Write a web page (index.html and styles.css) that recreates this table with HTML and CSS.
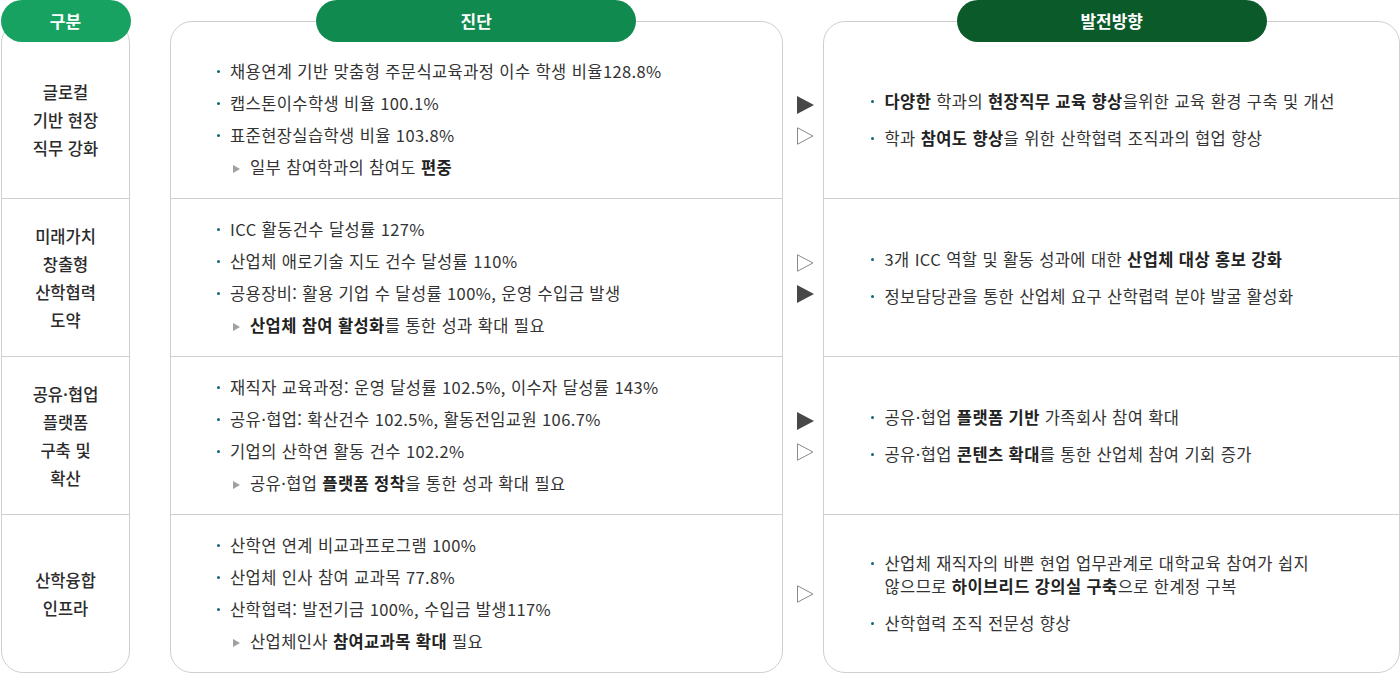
FILE: index.html
```html
<!DOCTYPE html>
<html lang="ko">
<head>
    <meta charset="UTF-8">
    <meta name="viewport" content="width=device-width, initial-scale=1.0">
    <title>진단 및 발전방향</title>
    <link rel="stylesheet" href="styles.css">
</head>
<body>
    <div class="board">
        <!-- 구분 -->
        <div class="col col-gubun">
            <div class="head head-gubun">구분</div>
            <div class="box">
                <div class="row"><p class="label">글로컬<br>기반 현장<br>직무 강화</p></div>
                <div class="row"><p class="label">미래가치<br>창출형<br>산학협력<br>도약</p></div>
                <div class="row"><p class="label">공유·협업<br>플랫폼<br>구축 및<br>확산</p></div>
                <div class="row"><p class="label">산학융합<br>인프라</p></div>
            </div>
        </div>

        <!-- 진단 -->
        <div class="col col-diag">
            <div class="head head-diag">진단</div>
            <div class="box">
                <div class="row">
                    <ul class="items">
                        <li>채용연계 기반 맞춤형 주문식교육과정 이수 학생 비율128.8%</li>
                        <li>캡스톤이수학생 비율 100.1%</li>
                        <li>표준현장실습학생 비율 103.8%</li>
                        <li class="sub">일부 참여학과의 참여도&nbsp;<b>편중</b></li>
                    </ul>
                </div>
                <div class="row">
                    <ul class="items">
                        <li>ICC 활동건수 달성률 127%</li>
                        <li>산업체 애로기술 지도 건수 달성률 110%</li>
                        <li>공용장비: 활용 기업 수 달성률 100%, 운영 수입금 발생</li>
                        <li class="sub"><b>산업체 참여 활성화</b>를 통한 성과 확대 필요</li>
                    </ul>
                </div>
                <div class="row">
                    <ul class="items">
                        <li>재직자 교육과정: 운영 달성률 102.5%, 이수자 달성률 143%</li>
                        <li>공유·협업: 확산건수 102.5%, 활동전임교원 106.7%</li>
                        <li>기업의 산학연 활동 건수 102.2%</li>
                        <li class="sub">공유·협업&nbsp;<b>플랫폼 정착</b>을 통한 성과 확대 필요</li>
                    </ul>
                </div>
                <div class="row">
                    <ul class="items">
                        <li>산학연 연계 비교과프로그램 100%</li>
                        <li>산업체 인사 참여 교과목 77.8%</li>
                        <li>산학협력: 발전기금 100%, 수입금 발생117%</li>
                        <li class="sub">산업체인사&nbsp;<b>참여교과목 확대</b>&nbsp;필요</li>
                    </ul>
                </div>
            </div>
        </div>

        <!-- arrows -->
        <div class="arrows">
            <div class="arrow-cell">
                <svg class="arr" width="17" height="18" viewBox="0 0 17 18"><polygon points="0,0 17,9 0,18" fill="#484848"/></svg>
                <svg class="arr" width="17" height="18" viewBox="0 0 17 18"><polygon points="0.5,0.8 15.9,9 0.5,17.2" fill="none" stroke="#8a8a8a"/></svg>
            </div>
            <div class="arrow-cell">
                <svg class="arr" width="17" height="18" viewBox="0 0 17 18"><polygon points="0.5,0.8 15.9,9 0.5,17.2" fill="none" stroke="#8a8a8a"/></svg>
                <svg class="arr" width="17" height="18" viewBox="0 0 17 18"><polygon points="0,0 17,9 0,18" fill="#484848"/></svg>
            </div>
            <div class="arrow-cell">
                <svg class="arr" width="17" height="18" viewBox="0 0 17 18"><polygon points="0,0 17,9 0,18" fill="#484848"/></svg>
                <svg class="arr" width="17" height="18" viewBox="0 0 17 18"><polygon points="0.5,0.8 15.9,9 0.5,17.2" fill="none" stroke="#8a8a8a"/></svg>
            </div>
            <div class="arrow-cell last">
                <svg class="arr" width="17" height="18" viewBox="0 0 17 18"><polygon points="0.5,0.8 15.9,9 0.5,17.2" fill="none" stroke="#8a8a8a"/></svg>
            </div>
        </div>

        <!-- 발전방향 -->
        <div class="col col-plan">
            <div class="head head-plan">발전방향</div>
            <div class="box">
                <div class="row">
                    <ul class="items wide">
                        <li><span><b>다양한</b> 학과의 <b>현장직무 교육 향상</b>을위한 교육 환경 구축 및 개선</span></li>
                        <li><span>학과 <b>참여도 향상</b>을 위한 산학협력 조직과의 협업 향상</span></li>
                    </ul>
                </div>
                <div class="row">
                    <ul class="items wide">
                        <li><span>3개 ICC 역할 및 활동 성과에 대한 <b>산업체 대상 홍보 강화</b></span></li>
                        <li><span>정보담당관을 통한 산업체 요구 산학렵력 분야 발굴 활성화</span></li>
                    </ul>
                </div>
                <div class="row">
                    <ul class="items wide">
                        <li><span>공유·협업 <b>플랫폼 기반</b> 가족회사 참여 확대</span></li>
                        <li><span>공유·협업 <b>콘텐츠 확대</b>를 통한 산업체 참여 기회 증가</span></li>
                    </ul>
                </div>
                <div class="row">
                    <ul class="items wide">
                        <li><span>산업체 재직자의 바쁜 현업 업무관계로 대학교육 참여가 쉽지<br>않으므로 <b>하이브리드 강의실 구축</b>으로 한계정 구복</span></li>
                        <li><span>산학협력 조직 전문성 향상</span></li>
                    </ul>
                </div>
            </div>
        </div>
    </div>
</body>
</html>
```

FILE: styles.css
```css
* {
    margin: 0;
    padding: 0;
    box-sizing: border-box;
}

body {
    background: #fff;
    color: #333;
    font-family: 'Noto Sans CJK KR', 'Noto Sans', sans-serif;
    overflow: hidden;
}

.board {
    display: flex;
    padding-left: 1px;
    width: 1400px;
    height: 673px;
}

.col {
    display: flex;
    flex-direction: column;
}

.col-gubun {
    width: 129px;
    margin-right: 40px;
}

.col-diag {
    width: 613px;
}

.col-plan {
    width: 577px;
}

/* header pills */
.head {
    position: relative;
    z-index: 1;
    align-self: center;
    height: 42px;
    border-radius: 21px;
    color: #fff;
    font-size: 17px;
    font-weight: 700;
    line-height: 42px;
    text-align: center;
}

.head-gubun {
    width: 130px;
    background: #17a262;
}

.head-diag {
    width: 320px;
    background: #118a4f;
}

.head-plan {
    width: 310px;
    background: #0a5a2a;
}

.box {
    margin-top: -21px;
    padding-top: 19px;
    border: 1px solid #cfcfcf;
    border-radius: 22px;
    flex: 1;
    display: flex;
    flex-direction: column;
}

.row {
    height: 158px;
    border-bottom: 1px solid #cfcfcf;
    display: flex;
    align-items: center;
}

.row:last-child {
    height: 157px;
    border-bottom: none;
}

.label {
    width: 100%;
    text-align: center;
    font-size: 16.5px;
    font-weight: 500;
    line-height: 28px;
    color: #2b2b2b;
}

/* bullet lists */
.items {
    list-style: none;
    padding-left: 46px;
    font-size: 16.5px;
    line-height: 23px;
    letter-spacing: 0.4px;
}

.items li {
    display: flex;
    align-items: flex-start;
    margin-bottom: 9px;
}

.items li:last-child {
    margin-bottom: 0;
}

.items li::before {
    content: '';
    flex: none;
    width: 3px;
    height: 3px;
    border-radius: 50%;
    background: #0e6878;
    margin: 10px 10px 0 0;
}

.items li.sub {
    display: block;
    padding-left: 16px;
}

.items li.sub::before {
    display: inline-block;
    width: 0;
    height: 0;
    border-radius: 0;
    background: none;
    border-style: solid;
    border-width: 4px 0 4px 7px;
    border-color: transparent transparent transparent #a0a0a0;
    margin: 0 10px 1px 0;
}

.items.wide {
    padding-left: 47px;
}

.items.wide li {
    margin-bottom: 14px;
}

.items.wide li:last-child {
    margin-bottom: 0;
}

.items b {
    font-weight: 700;
    color: #222;
}

/* arrows between columns */
.arrows {
    width: 41px;
    padding-top: 41px;
    display: flex;
    flex-direction: column;
}

.arrow-cell {
    height: 158px;
    display: flex;
    flex-direction: column;
    justify-content: center;
    gap: 13px;
    padding-left: 14px;
}

.arrow-cell.last {
    height: 157px;
}

.arr {
    display: block;
}
```
